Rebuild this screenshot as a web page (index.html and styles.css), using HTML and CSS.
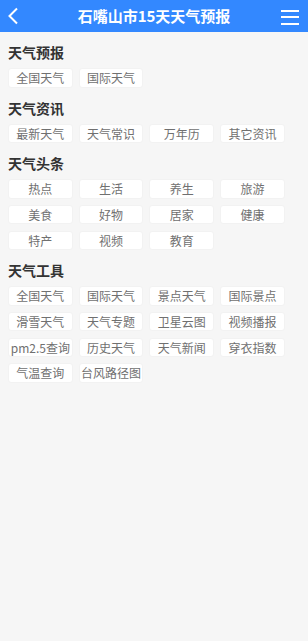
FILE: index.html
```html
<!DOCTYPE html>
<html lang="zh">
<head>
<meta charset="utf-8">
<title>石嘴山市15天天气预报</title>
<link rel="stylesheet" href="styles.css">
</head>
<body>
<header class="topbar">
  <svg class="back" width="12" height="18" viewBox="0 0 12 18"><path d="M10 1.5 L2.5 9 L10 16.5" fill="none" stroke="#fff" stroke-width="2"/></svg>
  <h1 class="title">石嘴山市15天天气预报</h1>
  <svg class="menu" width="20" height="16" viewBox="0 0 20 16"><rect x="1" y="1" width="18" height="2" fill="#fff"/><rect x="1" y="7" width="18" height="2" fill="#fff"/><rect x="1" y="14" width="18" height="2" fill="#fff"/></svg>
</header>
<main class="content">
  <section class="sec">
    <h2 class="sec-title">天气预报</h2>
    <div class="grid">
      <a class="btn">全国天气</a><a class="btn">国际天气</a>
    </div>
  </section>
  <section class="sec">
    <h2 class="sec-title">天气资讯</h2>
    <div class="grid">
      <a class="btn">最新天气</a><a class="btn">天气常识</a><a class="btn">万年历</a><a class="btn">其它资讯</a>
    </div>
  </section>
  <section class="sec">
    <h2 class="sec-title">天气头条</h2>
    <div class="grid">
      <a class="btn">热点</a><a class="btn">生活</a><a class="btn">养生</a><a class="btn">旅游</a>
      <a class="btn">美食</a><a class="btn">好物</a><a class="btn">居家</a><a class="btn">健康</a>
      <a class="btn">特产</a><a class="btn">视频</a><a class="btn">教育</a>
    </div>
  </section>
  <section class="sec">
    <h2 class="sec-title">天气工具</h2>
    <div class="grid">
      <a class="btn">全国天气</a><a class="btn">国际天气</a><a class="btn">景点天气</a><a class="btn">国际景点</a>
      <a class="btn">滑雪天气</a><a class="btn">天气专题</a><a class="btn">卫星云图</a><a class="btn">视频播报</a>
      <a class="btn">pm2.5查询</a><a class="btn">历史天气</a><a class="btn">天气新闻</a><a class="btn">穿衣指数</a>
      <a class="btn">气温查询</a><a class="btn">台风路径图</a>
    </div>
  </section>
</main>
</body>
</html>
```
FILE: styles.css
```css
* { box-sizing: border-box; }
html, body { margin: 0; padding: 0; }
body {
  background: #f6f6f6;
  font-family: "Noto Sans CJK SC", "Noto Sans", sans-serif;
  min-height: 641px;
}
.topbar {
  height: 32px;
  background: #3388ff;
  display: flex;
  align-items: center;
  justify-content: space-between;
  padding: 0 8px 0 7px;
  position: relative;
}
.back { display: block; }
.menu { display: block; margin-top: 2px; }
.title {
  margin: 0;
  color: #fff;
  font-size: 15px;
  font-weight: bold;
  line-height: 20px;
  position: absolute;
  left: 0; right: 0;
  text-align: center;
  pointer-events: none;
}
.content { padding: 10px 0 0 8px; }
.sec { margin-bottom: 10px; }
.sec-title {
  margin: 0 0 6px 0;
  font-size: 14px;
  line-height: 20px;
  font-weight: bold;
  color: #333;
}
.grid {
  display: grid;
  grid-template-columns: repeat(4, 64.7px);
  column-gap: 6px;
  row-gap: 6.3px;
}
.btn {
  display: block;
  height: 19.5px;
  line-height: 18px;
  background: #fff;
  border: 1px solid #f2f2f2;
  border-radius: 3px;
  text-align: center;
  font-size: 12px;
  color: #707070;
  white-space: nowrap;
}
```
